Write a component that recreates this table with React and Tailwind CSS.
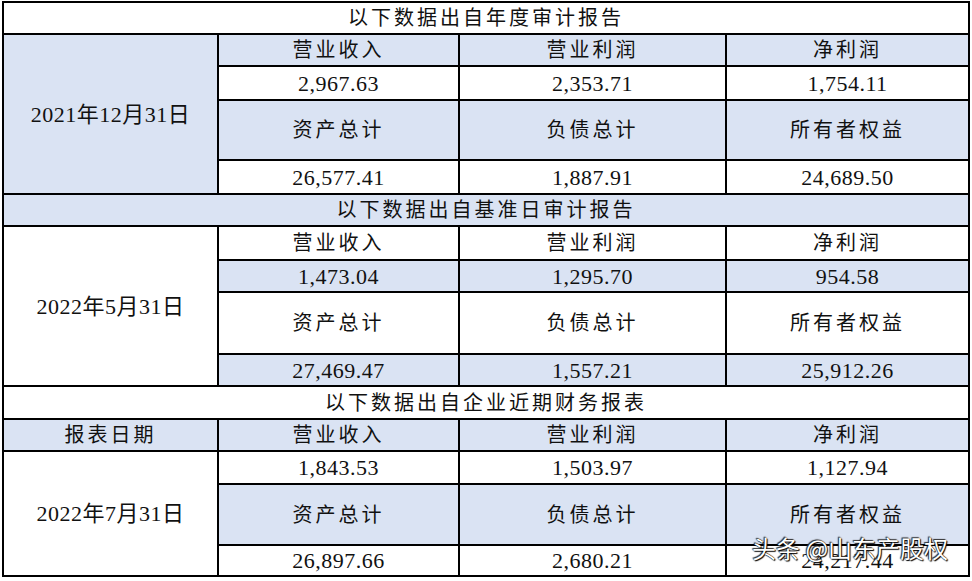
import React from "react";

const BLUE = "bg-[#dae3f3]";

const Cell = ({ children, blue, className = "", cjk }) => (
  <div
    className={`flex items-center justify-center ${blue ? BLUE : "bg-white"} ${
      cjk ? "text-[20px] tracking-[3px]" : "text-[22px] tracking-[0.5px]"
    } ${className}`}
  >
    {children}
  </div>
);

const Title = ({ children, blue }) => (
  <Cell blue={blue} cjk className="col-span-4">
    {children}
  </Cell>
);

const Row = ({ items, blue, cjk }) =>
  items.map((t) => (
    <Cell key={t} blue={blue} cjk={cjk}>
      {t}
    </Cell>
  ));

const heads1 = ["营业收入", "营业利润", "净利润"];
const heads2 = ["资产总计", "负债总计", "所有者权益"];

export default function App() {
  return (
    <div className="min-h-screen bg-white pl-[2px] pt-[1px] font-['Liberation_Serif','Noto_Sans_CJK_SC',serif] text-[#111]">
      <div className="relative w-[968px]">
        <div className="grid w-[968px] grid-cols-[213px_239px_265px_241px] grid-rows-[30px_30px_32px_58px_32px_30px_32px_30px_60px_30px_31px_30px_31px_59px_29px] gap-[2px] bg-black p-[2px]">
          <Title>以下数据出自年度审计报告</Title>
          <Cell blue className="row-span-4">
            2021年12月31日
          </Cell>
          <Row items={heads1} blue cjk />
          <Row items={["2,967.63", "2,353.71", "1,754.11"]} />
          <Row items={heads2} blue cjk />
          <Row items={["26,577.41", "1,887.91", "24,689.50"]} />

          <Title blue>以下数据出自基准日审计报告</Title>
          <Cell className="row-span-4">2022年5月31日</Cell>
          <Row items={heads1} cjk />
          <Row items={["1,473.04", "1,295.70", "954.58"]} blue />
          <Row items={heads2} cjk />
          <Row items={["27,469.47", "1,557.21", "25,912.26"]} blue />

          <Title>以下数据出自企业近期财务报表</Title>
          <Cell blue cjk>
            报表日期
          </Cell>
          <Row items={heads1} blue cjk />
          <Cell className="row-span-3">2022年7月31日</Cell>
          <Row items={["1,843.53", "1,503.97", "1,127.94"]} />
          <Row items={heads2} blue cjk />
          <Row items={["26,897.66", "2,680.21", "24,217.44"]} />
        </div>
        <div className="absolute left-[750px] top-[532px] font-['Noto_Sans_CJK_SC',sans-serif] text-[24px] leading-[30px] text-white [text-shadow:0_0_1px_#000,1px_1px_1px_#000,-1px_-1px_1px_#333]">
          头条 @山东产股权
        </div>
      </div>
    </div>
  );
}
